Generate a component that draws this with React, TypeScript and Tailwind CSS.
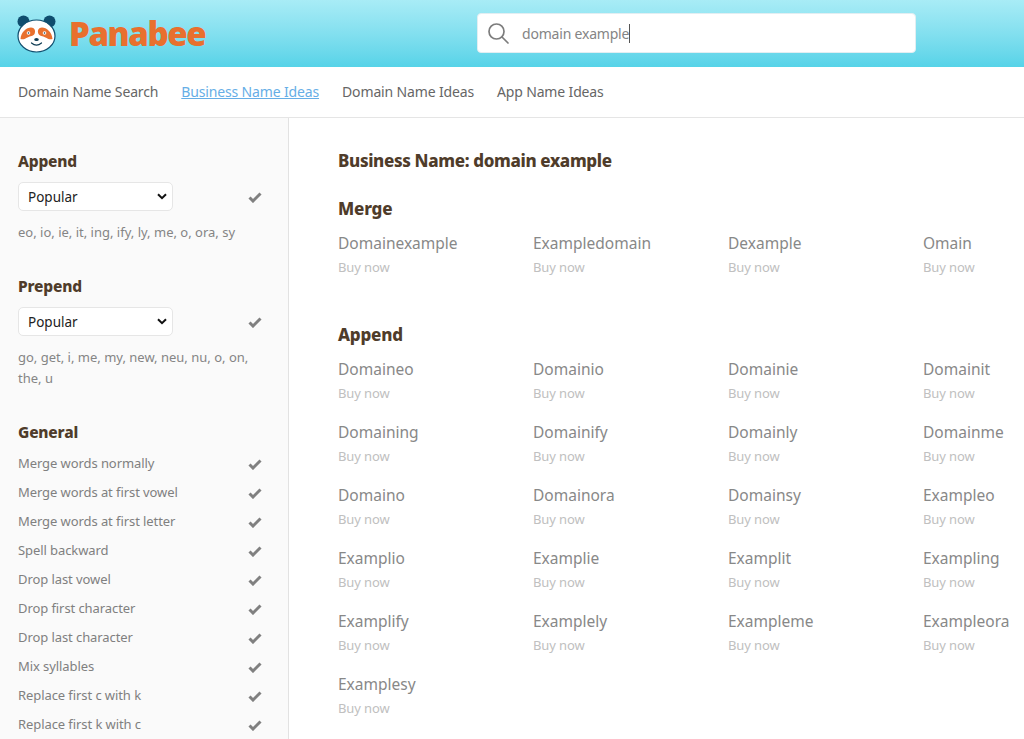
import React from "react";

const font = { fontFamily: '"Noto Sans", sans-serif' };

function Panda() {
  return (
    <svg width="40" height="38" viewBox="0 0 40 38" className="shrink-0">
      <circle cx="6.5" cy="6.5" r="6" fill="#0f4d6e" />
      <circle cx="32.5" cy="6.5" r="6" fill="#0f4d6e" />
      <ellipse cx="19.5" cy="21" rx="18.5" ry="16" fill="#fff" stroke="#0f4d6e" strokeWidth="1.2" />
      <path d="M3.5 24c.5-7 6-11.500 10.500-11.500 3.500 0 5 3 3.500 6.500-1.500 2.500-4 1.500-7 3.500-2 1-4 2.500-7 1.500z" fill="#e8702e" />
      <path d="M35.500 24c-.5-7-6-11.500-10.500-11.500-3.500 0-5 3-3.500 6.500 1.500 2.500 4 1.500 7 3.500 2 1 4 2.500 7 1.500z" fill="#e8702e" />
      <circle cx="11.500" cy="18" r="1.800" fill="#fff" />
      <circle cx="27.500" cy="18" r="1.800" fill="#fff" />
      <circle cx="11.500" cy="18" r="0.800" fill="#0f3d55" />
      <circle cx="27.500" cy="18" r="0.800" fill="#0f3d55" />
      <ellipse cx="19.500" cy="24.500" rx="2.300" ry="1.500" fill="#0f3d55" />
      <path d="M14.500 28c3 2.500 7 2.500 10 0" fill="none" stroke="#0f3d55" strokeWidth="1.200" strokeLinecap="round" />
    </svg>
  );
}

function Check() {
  return (
    <svg width="14" height="12" viewBox="0 0 14 12" className="shrink-0">
      <path d="M1.500 6.500 5 10 12.500 2.500" fill="none" stroke="#808080" strokeWidth="3" />
    </svg>
  );
}

const headingClass = "text-[15.5px] leading-[22px] font-extrabold text-[#4f3c2a] tracking-[-0.2px]";

function Pick({ title, text }: { title: string; text: React.ReactNode }) {
  return (
    <div className="mb-[32px]">
      <h3 className={headingClass}>{title}</h3>
      <div className="flex items-center justify-between mt-[10px] pr-[26px]">
        <div className="w-[155px] h-[29px] bg-white border border-[#e6e6e6] rounded-[5px] flex items-center justify-between pl-[9px] pr-[5px] text-[13.5px] text-[#222]">
          <span className="pt-[1px]">Popular</span>
          <svg width="10" height="7" viewBox="0 0 10 7">
            <path d="M1 1.200 5 5.200 9 1.200" fill="none" stroke="#111" strokeWidth="2" />
          </svg>
        </div>
        <Check />
      </div>
      <p className="mt-[11px] text-[13px] leading-[21px] text-[#858585] pr-[30px]">{text}</p>
    </div>
  );
}

const general = [
  "Merge words normally",
  "Merge words at first vowel",
  "Merge words at first letter",
  "Spell backward",
  "Drop last vowel",
  "Drop first character",
  "Drop last character",
  "Mix syllables",
  "Replace first c with k",
  "Replace first k with c",
];

const append = [
  "Domaineo", "Domainio", "Domainie", "Domainit",
  "Domaining", "Domainify", "Domainly", "Domainme",
  "Domaino", "Domainora", "Domainsy", "Exampleo",
  "Examplio", "Examplie", "Examplit", "Exampling",
  "Examplify", "Examplely", "Exampleme", "Exampleora",
  "Examplesy",
];

function Names({ items }: { items: string[] }) {
  return (
    <div className="grid grid-cols-[195px_195px_195px_195px] w-[780px]">
      {items.map((n) => (
        <div key={n} className="h-[63px]">
          <div className="text-[15.5px] leading-[24px] text-[#888] whitespace-nowrap">{n}</div>
          <div className="text-[13px] leading-[20px] mt-[2px] text-[#c0c0c0] tracking-[-0.1px]">Buy now</div>
        </div>
      ))}
    </div>
  );
}

export default function App() {
  return (
    <div className="w-[1024px] h-[739px] overflow-hidden bg-white flex flex-col" style={font}>
      <header className="h-[67px] shrink-0 bg-gradient-to-b from-[#a8ecf6] to-[#56d3e8] flex items-center pl-[17px]">
        <div className="w-[460px] shrink-0 flex items-center">
          <Panda />
          <span className="ml-[12px] text-[33px] leading-none font-extrabold text-[#e8702e] tracking-[-1.4px]" style={{ fontFamily: '"Open Sans", sans-serif' }}>
            Panabee
          </span>
        </div>
        <div className="mb-[1px] w-[439px] h-[40px] bg-white rounded-[4px] border border-[#e2eef2] flex items-center pl-[9px]">
          <svg width="22" height="22" viewBox="0 0 22 22" fill="none" stroke="#7c7c7c" strokeWidth="1.700">
            <circle cx="9.500" cy="9.500" r="7.500" />
            <path d="M15 15l6 6" strokeLinecap="round" />
          </svg>
          <span className="ml-[13px] text-[14px] tracking-[-0.2px] text-[#858585]">domain example</span>
          <span className="w-px h-[19px] bg-[#555]" />
        </div>
      </header>
      <nav className="h-[51px] shrink-0 border-b border-[#e5e5e5] flex items-center pl-[18px] pb-[2px] gap-[23px] text-[14px] tracking-[-0.15px] text-[#666]">
        <span>Domain Name Search</span>
        <span className="text-[#66aee6] underline">Business Name Ideas</span>
        <span>Domain Name Ideas</span>
        <span>App Name Ideas</span>
      </nav>
      <div className="flex flex-1 min-h-0">
        <aside className="w-[289px] shrink-0 bg-[#fafafa] border-r border-[#e2e2e2] pl-[18px] pt-[32px]">
          <Pick title="Append" text="eo, io, ie, it, ing, ify, ly, me, o, ora, sy" />
          <Pick title="Prepend" text="go, get, i, me, my, new, neu, nu, o, on, the, u" />
          <h3 className={headingClass}>General</h3>
          <ul className="mt-[6px]">
            {general.map((g) => (
              <li key={g} className="h-[29px] flex items-center justify-between pr-[26px] text-[13px] tracking-[-0.08px] text-[#808080]">
                <span>{g}</span>
                <Check />
              </li>
            ))}
          </ul>
        </aside>
        <main className="flex-1 min-w-0 pl-[49px] pt-[31px]">
          <h2 className="text-[17px] leading-[24px] font-extrabold text-[#4f3c2a] tracking-[-0.35px]">Business Name: domain example</h2>
          <h3 className="mt-[24px] text-[17px] leading-[24px] font-extrabold text-[#4f3c2a] tracking-[-0.2px]">Merge</h3>
          <div className="mt-[10px]"><Names items={["Domainexample", "Exampledomain", "Dexample", "Omain"]} /></div>
          <h3 className="mt-[29px] text-[17px] leading-[24px] font-extrabold text-[#4f3c2a] tracking-[-0.2px]">Append</h3>
          <div className="mt-[10px]"><Names items={append} /></div>
        </main>
      </div>
    </div>
  );
}
